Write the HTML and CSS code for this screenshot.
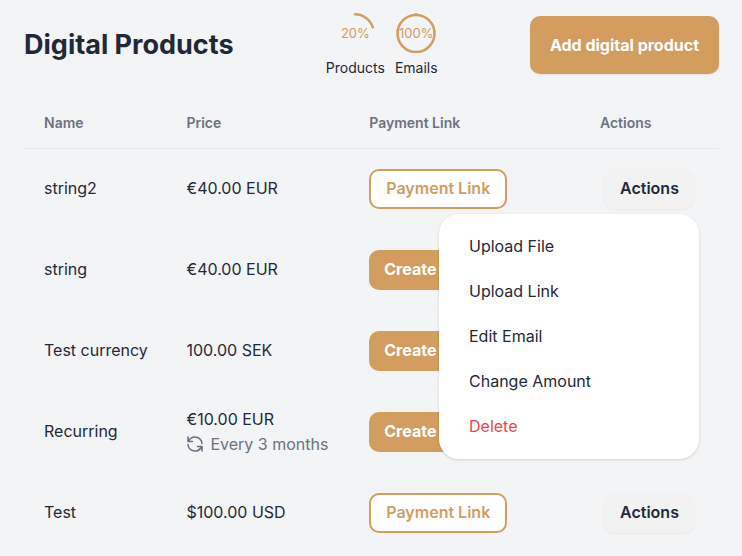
FILE: index.html
```html
<!DOCTYPE html>
<html lang="en">
<head>
    <meta charset="UTF-8">
    <title>Digital Products</title>
    <link rel="stylesheet" href="styles.css">
</head>
<body>
    <header class="page-header">
        <h1>Digital Products</h1>
        <div class="usage">
            <div class="usage-item">
                <div class="ring">
                    <svg viewBox="0 0 40 40"><path d="M20 1.300A18.700 18.700 0 0 1 37.800 14.300"/></svg>
                    <span>20%</span>
                </div>
                <span>Products</span>
            </div>
            <div class="usage-item">
                <div class="ring">
                    <svg viewBox="0 0 40 40"><circle cx="20" cy="20.500" r="18.500"/><path d="M20 .8v1"/></svg>
                    <span>100%</span>
                </div>
                <span>Emails</span>
            </div>
        </div>
        <button type="button" class="btn btn-add">Add digital product</button>
    </header>

    <table class="products">
        <thead>
            <tr>
                <th class="col-name">Name</th>
                <th class="col-price">Price</th>
                <th class="col-link">Payment Link</th>
                <th class="col-actions">Actions</th>
            </tr>
        </thead>
        <tbody>
            <tr>
                <td>string2</td>
                <td>€40.00 EUR</td>
                <td><button type="button" class="btn btn-outline">Payment Link</button></td>
                <td>
                    <div class="dropdown">
                        <button type="button" class="btn btn-actions" aria-expanded="true">Actions</button>
                        <div class="menu">
                            <button type="button">Upload File</button>
                            <button type="button">Upload Link</button>
                            <button type="button">Edit Email</button>
                            <button type="button">Change Amount</button>
                            <button type="button" class="danger">Delete</button>
                        </div>
                    </div>
                </td>
            </tr>
            <tr>
                <td>string</td>
                <td>€40.00 EUR</td>
                <td><button type="button" class="btn btn-create">Create</button></td>
                <td></td>
            </tr>
            <tr>
                <td>Test currency</td>
                <td>100.00 SEK</td>
                <td><button type="button" class="btn btn-create">Create</button></td>
                <td></td>
            </tr>
            <tr>
                <td>Recurring</td>
                <td>
                    €10.00 EUR
                    <div class="interval">
                        <svg viewBox="0 0 18 18"><path d="M2 2v4.500h4.500M3 5.500A7 7 0 0 1 16 8.500M16 16v-4.500h-4.500M15 12.500A7 7 0 0 1 2 9.500"/></svg>
                        Every 3 months
                    </div>
                </td>
                <td><button type="button" class="btn btn-create">Create</button></td>
                <td></td>
            </tr>
            <tr>
                <td>Test</td>
                <td>$100.00 USD</td>
                <td><button type="button" class="btn btn-outline">Payment Link</button></td>
                <td>
                    <div class="dropdown">
                        <button type="button" class="btn btn-actions">Actions</button>
                    </div>
                </td>
            </tr>
        </tbody>
    </table>
</body>
</html>
```
FILE: styles.css
```css
* {
    box-sizing: border-box;
}

body {
    margin: 0;
    padding: 13px 23px 0 24px;
    background: #f3f4f6;
    color: #1f2937;
    font-family: Inter, "Liberation Sans", sans-serif;
    font-size: 16px;
    line-height: 25px;
}

.page-header {
    display: flex;
    justify-content: space-between;
    align-items: center;
}

h1 {
    margin: 0;
    font-size: 27px;
    line-height: 36px;
    font-weight: 700;
}

.usage {
    display: flex;
    gap: 10px;
    font-size: 14px;
    line-height: 19px;
}

.usage-item {
    display: flex;
    flex-direction: column;
    align-items: center;
    gap: 5px;
}

.ring {
    display: grid;
    place-items: center;
    width: 40px;
    height: 40px;
    color: #d39d60;
    font-size: 13px;
}

.ring svg,
.ring span {
    grid-area: 1 / 1;
}

.ring svg {
    width: 40px;
    height: 40px;
    fill: none;
    stroke: #d39d60;
    stroke-width: 2.5;
    stroke-linecap: round;
}

.btn {
    height: 40px;
    border: none;
    border-radius: 10px;
    padding: 0 15px;
    font: inherit;
    font-weight: 600;
    cursor: pointer;
}

.btn-add {
    height: 58px;
    padding: 0 20px;
    background: #d39d60;
    color: white;
    font-weight: 700;
    box-shadow: 0 1px 2px rgba(0, 0, 0, 0.08);
}

.btn-outline {
    width: 138px;
    padding: 0;
    background: white;
    border: 2px solid #d39d60;
    color: #d39d60;
}

.btn-create {
    width: 138px;
    background: #d39d60;
    color: white;
    font-weight: 700;
    text-align: left;
}

.btn-actions {
    width: 90px;
    padding: 0;
    background: #f2f2f2;
    color: #1f2937;
    box-shadow: 0 1px 2px rgba(0, 0, 0, 0.05);
}

.products {
    width: 100%;
    margin-top: 20px;
    border-collapse: collapse;
    table-layout: fixed;
}

th {
    height: 51px;
    padding: 0 20px;
    border-bottom: 1px solid #e5e7eb;
    color: #6b7280;
    font-size: 14px;
    font-weight: 600;
    text-align: left;
}

td {
    height: 81px;
    padding: 0 20px;
    border-bottom: 1px solid #f1f2f4;
    white-space: nowrap;
}

.col-name {
    width: 20.5%;
}

.col-price {
    width: 26.3%;
}

.col-link {
    width: 33.2%;
}

.interval {
    display: flex;
    align-items: center;
    gap: 6px;
    color: #6b7280;
}

.interval svg {
    width: 18px;
    height: 18px;
    fill: none;
    stroke: #6b7280;
    stroke-width: 1.6;
    stroke-linecap: round;
    stroke-linejoin: round;
}

.dropdown {
    position: relative;
    display: flex;
    justify-content: center;
}

.menu {
    position: absolute;
    top: 45px;
    right: 0;
    display: flex;
    flex-direction: column;
    width: 260px;
    padding: 10px 0;
    background: white;
    border-radius: 20px;
    box-shadow: 0 1px 3px rgba(0, 0, 0, 0.15);
}

.menu button {
    padding: 10px 30px;
    border: none;
    background: none;
    color: #1f2937;
    font: inherit;
    text-align: left;
    cursor: pointer;
}

.menu .danger {
    color: #ef4444;
}
```
